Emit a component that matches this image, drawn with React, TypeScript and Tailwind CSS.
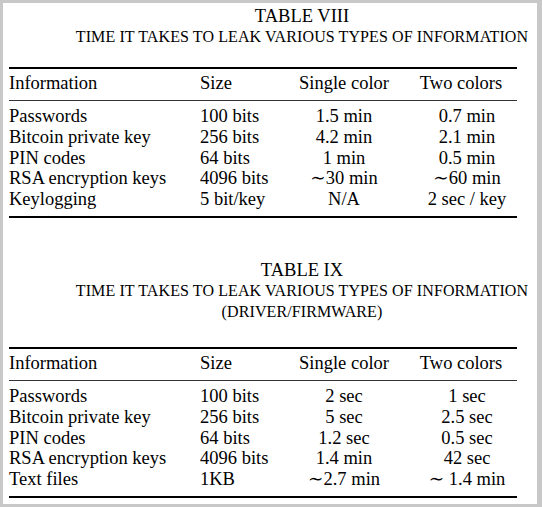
import React from "react";

type Row = [string, string, string, string];

const rows8: Row[] = [
  ["Passwords", "100 bits", "1.5 min", "0.7 min"],
  ["Bitcoin private key", "256 bits", "4.2 min", "2.1 min"],
  ["PIN codes", "64 bits", "1 min", "0.5 min"],
  ["RSA encryption keys", "4096 bits", "\u223C30 min", "\u223C60 min"],
  ["Keylogging", "5 bit/key", "N/A", "2 sec / key"],
];

const rows9: Row[] = [
  ["Passwords", "100 bits", "2 sec", "1 sec"],
  ["Bitcoin private key", "256 bits", "5 sec", "2.5 sec"],
  ["PIN codes", "64 bits", "1.2 sec", "0.5 sec"],
  ["RSA encryption keys", "4096 bits", "1.4 min", "42 sec"],
  ["Text files", "1KB", "\u223C2.7 min", "\u223C 1.4 min"],
];

function DataTable({ rows }: { rows: Row[] }) {
  return (
    <div className="ml-[6px] w-[508px] border-t-2 border-b-2 border-black text-[18.5px]">
      <div className="grid grid-cols-[191px_88px_112px_117px] pt-[4.3px] pb-[5.7px] leading-[21px] border-b border-[#333]">
        <div>Information</div>
        <div>Size</div>
        <div className="text-center">Single color</div>
        <div className="text-center pl-[5px]">Two colors</div>
      </div>
      <div className="pt-[5px] pb-[6px] leading-[20.8px]">
        {rows.map((r) => (
          <div key={r[0]} className="grid grid-cols-[191px_88px_112px_117px]">
            <div className="whitespace-nowrap">{r[0]}</div>
            <div className="whitespace-nowrap">{r[1]}</div>
            <div className="text-center whitespace-nowrap">{r[2]}</div>
            <div className="text-center pl-[17px] whitespace-nowrap">{r[3]}</div>
          </div>
        ))}
      </div>
    </div>
  );
}

export default function App() {
  return (
    <div className="w-[542px] h-[507px] bg-[#c8c8c8] pt-[3px] pl-[3px] pr-[5px] pb-[3px] text-black font-['Liberation_Serif','DejaVu_Serif',serif]">
      <div className="h-full bg-white overflow-hidden">
        <div className="pl-[64px] pt-[2.5px] text-center">
          <div className="text-[18.5px] leading-[20px]">TABLE VIII</div>
          <div className="mt-[1px] text-[16px] leading-[20px] tracking-[0.1px] whitespace-nowrap">
            TIME IT TAKES TO LEAK VARIOUS TYPES OF INFORMATION
          </div>
        </div>
        <div className="mt-[20.5px]">
          <DataTable rows={rows8} />
        </div>
        <div className="pl-[64px] mt-[42px] text-center">
          <div className="text-[18.5px] leading-[20px]">TABLE IX</div>
          <div className="mt-[1.5px] text-[16px] leading-[20px] tracking-[0.1px] whitespace-nowrap">
            TIME IT TAKES TO LEAK VARIOUS TYPES OF INFORMATION
          </div>
          <div className="mt-[0.5px] text-[16px] leading-[20px] tracking-[0.1px]">(DRIVER/FIRMWARE)</div>
        </div>
        <div className="mt-[25px]">
          <DataTable rows={rows9} />
        </div>
      </div>
    </div>
  );
}
